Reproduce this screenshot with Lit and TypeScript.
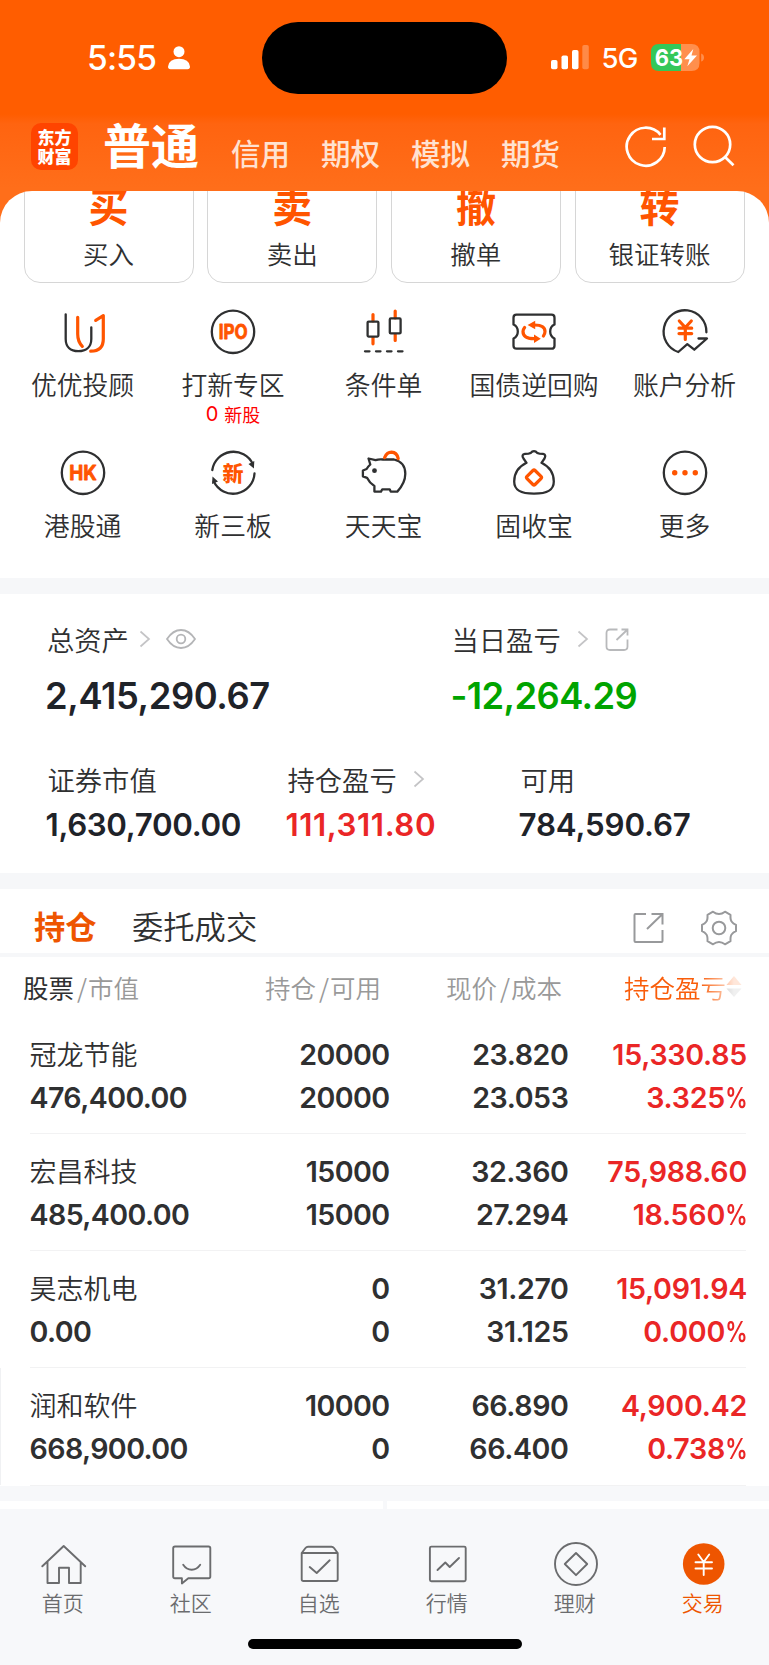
import { LitElement, html, css, svg } from "lit";
import { customElement } from "lit/decorators.js";

const ring = svg`<circle cx="23" cy="22.8" r="21.2" />`;

const serviceIcons: Record<string, unknown> = {
  advisor: svg`<path d="M5.7 5.3V30c0 8 5 12.2 12.6 12.2S31.3 38 31.3 30V18.3"/><path class="o" d="M17.7 8.3V25c0 6 1.300 9 4.600 12.300M35.700 11.300L43.300 6.700V30c0 8-4 12.200-12.600 12.200"/>`,
  ipo: svg`${ring}<text class="glyph" x="23.200" y="30" font-size="20" textLength="29" lengthAdjust="spacingAndGlyphs">IPO</text>`,
  condition: svg`<path class="o" d="M12 5.500V12M12 28.500V34.800M34.200 2V9M34.200 25.500V31.500"/><rect x="6.600" y="12.600" width="10.800" height="15" rx="1"/><rect x="28.800" y="9.400" width="10.800" height="15" rx="1"/><path d="M4 42.300h4.500M15 42.300h4.500M26 42.300h4.500M37 42.300h4.500"/>`,
  bond: svg`<path d="M5.500 5.700H40.500q3 0 3 3V15.500q-4.300 2-4.300 7t4.300 7V36.700q0 3-3 3H5.500q-3 0-3-3V29.500q4.300-2 4.300-7t-4.300-7V8.700q0-3 3-3Z"/><path class="o" stroke-width="2.700" d="M23.500 16C31 16 34 18.500 34 22.500Q34 25 32.400 27M23 29.700C15 29.700 12 26.500 12 22.500Q12 20.500 13.600 18.500"/><path class="of" d="M16.600 16L24.200 11.800V20.200ZM29.800 29.700L23 25.500V33.900Z"/>`,
  analysis: svg`<path d="M44.400 23.300A21.400 21.400 0 1 0 16.300 43L25.300 35.200L32.300 40.700L45 29.500H36.500"/><path class="o" stroke-width="3" d="M17.300 12L23.300 18.500L29.300 12M23.300 18.500V30.500M17 19.200H29.700M17 24.600H29.700"/>`,
  hk: svg`${ring}<text class="glyph" x="23" y="30" font-size="20" textLength="27.500" lengthAdjust="spacingAndGlyphs">HK</text>`,
  board: svg`<path d="M2.300 20A21.400 21.400 0 0 1 42.800 14M44.500 23.500A21.400 21.400 0 0 1 3.800 31.500"/><path class="d" d="M44.300 11L43.900 18.500L38.500 14ZM2 34L2.500 26.500L8 31.500Z"/><text class="glyph cjk" x="23" y="30.500" font-size="21">新</text>`,
  pig: svg`<path d="M1.900 20.500L5.600 19Q7 16.500 9.300 14.500L7.500 8.500L14.500 10.200Q18 9 22 9.500L33 9.500Q44.300 12 44.300 23.800Q44.300 33 36.300 41.600H29.700L28.700 39.300H21.300L20 41.600H13.400V36Q8.500 33 6 27.800L1.900 26.300Z"/><circle class="d" cx="13.500" cy="20.700" r="2.400"/><path class="o" stroke-width="3" d="M23.600 7.600Q26 2.200 30.500 2.200Q36 2.500 37.200 8.600"/>`,
  bag: svg`<path d="M15.500 12.800L12.500 8.500Q10 4.500 14 3.800L17.500 3.600Q20 3.300 21.200 1.600Q23 .700 24.800 1.600Q26 3.300 28.500 3.600L32 3.800Q35.500 4.500 33.500 8.500L30.500 12.800M15.500 12.800C7 17 3.200 24.500 3.200 31.500C3.200 40.500 10 43.600 23 43.600S42.800 40.500 42.800 31.500C42.800 24.500 39 17 30.500 12.800"/><rect class="o" stroke-width="3.200" x="17.300" y="21.800" width="11.400" height="11.400" rx="1.500" transform="rotate(45 23 27.500)"/>`,
  more: svg`${ring}<g class="of"><circle cx="12.700" cy="22.800" r="2.700"/><circle cx="23" cy="22.800" r="2.700"/><circle cx="33.300" cy="22.800" r="2.700"/></g>`,
};

const tabIcons: Record<string, unknown> = {
  home: svg`<path d="M1.300 25.300L22.700 5L44.200 25.300M6.500 21V42H18V26.800H28V42H39.700V21"/>`,
  chat: svg`<path d="M6 5.500H39.500q1.800 0 1.800 1.800V35.500q0 1.800-1.800 1.800H19.300L12.900 42.500V37.300H6q-1.800 0-1.800-1.800V7.300q0-1.800 1.800-1.800Z"/><path d="M14.200 23.700Q17.500 28.700 22.700 28.700T31.200 23.700"/>`,
  pick: svg`<path d="M4.700 12V38.200q0 1.800 1.800 1.800H38.900q1.800 0 1.800-1.800V12L37 7Q36 5.700 34.500 5.700H11Q9.500 5.700 8.500 7ZM4.700 12H40.700"/><path d="M12.700 26L19.700 32L32.700 19.300"/>`,
  market: svg`<rect x="4.900" y="5.600" width="35.800" height="34.700" rx="1.500"/><path d="M12.500 29L20.300 21.500L24.700 26L34 17"/>`,
  wealth: svg`<circle cx="23" cy="23" r="21"/><path d="M23 12L34.200 23L23 34.200L11.800 23Z"/>`,
  trade: svg`<circle cx="22.700" cy="23" r="20.800" fill="#ee5500" stroke="none"/><path stroke="#fff" d="M17.300 13.500L22.700 21L28.200 13.500M22.700 21V34M14.500 21.300H31M14.500 27.500H31"/>`,
};

const actions = [
  ["买", "买入"], ["卖", "卖出"], ["撤", "撤单"], ["转", "银证转账"],
];
const services = [
  ["advisor", "优优投顾", ""], ["ipo", "打新专区", "0"], ["condition", "条件单", ""], ["bond", "国债逆回购", ""], ["analysis", "账户分析", ""],
  ["hk", "港股通", ""], ["board", "新三板", ""], ["pig", "天天宝", ""], ["bag", "固收宝", ""], ["more", "更多", ""],
];
const holdings = [
  ["冠龙节能", "476,400.00", "20000", "20000", "23.820", "23.053", "15,330.85", "3.325"],
  ["宏昌科技", "485,400.00", "15000", "15000", "32.360", "27.294", "75,988.60", "18.560"],
  ["昊志机电", "0.00", "0", "0", "31.270", "31.125", "15,091.94", "0.000"],
  ["润和软件", "668,900.00", "10000", "0", "66.890", "66.400", "4,900.42", "0.738"],
];
const tabs = [
  ["home", "首页"], ["chat", "社区"], ["pick", "自选"], ["market", "行情"], ["wealth", "理财"], ["trade", "交易"],
];

const chevron = html`<svg class="chev" width="12" height="18" viewBox="0 0 12 18"><path d="M1.500 1.500L10 9L1.500 16.500" fill="none" stroke="#c4c4c6" stroke-width="1.700"/></svg>`;

@customElement("app-root")
export class AppRoot extends LitElement {
  static styles = css`
    :host { display: block; width: 769px; height: 1665px; overflow: hidden; background: #fff; color: #2f3031;
      font-family: Inter, "Noto Sans CJK SC", sans-serif; font-weight: 400; }
    * { box-sizing: border-box; }
    svg { display: block; flex: none; }
    .zh, .svc, .card, .lab, .th, .tabbar, .tabs, .nav { font-family: "Noto Sans CJK SC", sans-serif; }

    .head { height: 223px; background: linear-gradient(#ff5d00 0, #ff5d00 114px, #ff6410 124px, #ff6e1a 188px, #ff6e1a 223px); color: #fff; }
    .status { height: 118px; display: grid; grid-template-columns: 262px 245px 262px; }
    .left { display: flex; padding: 38px 0 0 87px; height: 80px; }
    .time { font-size: 33.500px; line-height: 40px; font-weight: 550; letter-spacing: -.8px; width: 81px; }
    .person { margin-top: 8px; }
    .island { margin-top: 22px; height: 72px; border-radius: 36px; background: #000; }
    .right { display: flex; padding-left: 44px; padding-top: 38px; }
    .sig { margin-top: 7px; }
    .net { font-size: 27.500px; line-height: 41px; font-weight: 500; margin-left: 12.500px; width: 38px; letter-spacing: -.8px; }
    .batt { margin: 6px 0 0 11.500px; }
    .nav { display: flex; height: 73px; padding-left: 31px; }
    .logo { width: 47px; height: 47px; margin-top: 5px; border-radius: 10px; background: #ff4400; font-weight: 900; font-size: 17px; line-height: 19px; text-align: center; padding-top: 4px; }
    .main { font-size: 48px; font-weight: 700; line-height: 60px; margin: -5px 0 0 25px; width: 96px; white-space: nowrap; }
    .sub { display: flex; gap: 31px; margin: 13.500px 0 0 32px; font-size: 29.500px; line-height: 40px; font-weight: 500; color: #ffe2d1; width: 394px; white-space: nowrap; }
    .ri { margin-top: 7px; }
    .si { margin: 7px 0 0 26px; }

    .sheet { margin-top: -32px; height: 387px; background: #fff; border-radius: 32px 32px 0 0; position: relative; overflow: hidden; }
    .cards { display: grid; grid-template-columns: repeat(4, 170px); gap: 13.700px; padding-left: 23.500px; height: 92px; overflow: hidden; }
    .card { margin-top: -40px; height: 132px; border: 1.500px solid #d6d6d6; border-radius: 16px; text-align: center; display: flex; flex-direction: column; }
    .big { font-size: 40px; line-height: 50px; font-weight: 700; color: #ff5500; margin-top: 28px; }
    .small { font-size: 25.500px; line-height: 36px; margin-top: 5px; white-space: nowrap; font-weight: 350; }
    .grid { display: grid; grid-template-columns: repeat(5, 150.500px); grid-template-rows: 140.500px 140px; padding: 26px 0 0 7.300px; }
    .svc { display: flex; flex-direction: column; align-items: center; }
    .svc svg { fill: none; stroke: #2f3031; stroke-width: 2.300; stroke-linejoin: round; stroke-linecap: round; overflow: visible; }
    .svc .o { stroke: #ff5500; stroke-width: 3.200; }
    .svc svg .of { fill: #ff5500; stroke: none; }
    .svc svg .d { fill: #2f3031; stroke: none; }
    .glyph { fill: #ff5500; stroke: #ff5500; stroke-width: .8; font-family: Inter; font-weight: 750; text-anchor: middle; }
    .svc .cjk { font-family: "Noto Sans CJK SC"; font-weight: 900; stroke: none; }
    .name { font-size: 25.800px; line-height: 36px; margin-top: 11px; font-weight: 350; white-space: nowrap; }
    .badge { color: #f00; font-size: 18px; line-height: 26px; height: 26px; margin-top: -1px; display: flex; align-items: center; gap: 6px; }
    .badge b { font: 400 20px/26px Inter; }
    .band { height: 15.500px; background: #f6f7f9; }

    .assets { height: 279.500px; padding-top: 25.500px; }
    .two { display: grid; grid-template-columns: 405.500px 1fr; padding-left: 45px; height: 140px; }
    .three { display: grid; grid-template-columns: 240px 233px 1fr; padding-left: 45.500px; }
    .lab { display: flex; align-items: center; height: 40px; font-size: 27.300px; padding-left: 2px; font-weight: 350; white-space: nowrap; }
    .two .far2 { padding-left: 1px; }
    .lab .chev { margin-left: 10px; }
    .lab .far { margin-left: 16px; }
    .v1 { font-size: 36.300px; font-weight: 600; line-height: 44px; margin-top: 15px; color: #1f2329; letter-spacing: -.4px; }
    .v2 { font-size: 31.300px; font-weight: 600; line-height: 40px; margin-top: 6px; color: #1f2329; letter-spacing: -.35px; }
    .v1.green { color: #00a400; letter-spacing: -.6px; }
    .v2.red { letter-spacing: .55px; }
    .v2.avail { letter-spacing: -.15px; }
    .red { color: #ea2626; }

    .tabs { display: flex; height: 64px; padding: 14px 0 0 34px; font-size: 31.300px; line-height: 46px; white-space: nowrap; }
    .on { color: #ee5500; font-weight: 700; width: 98px; }
    .off { width: 500px; font-weight: 350; }
    .rule { height: 4px; background: #f6f7f9; }
    .th { display: grid; grid-template-columns: 381px 181px 1fr; height: 60px; padding-top: 10px; line-height: 40px; font-size: 25.500px; color: #999; white-space: nowrap; font-weight: 350; }
    .hold { display: flex; justify-content: space-between; padding-left: 23px; }
    .th b { font-weight: 400; color: #2f3031; }
    .sl { padding: 0 1px 0 3px; }
    .r { text-align: right; }
    .sort { display: flex; align-items: center; height: 40px; padding-left: 62px; color: #f95d0a; -webkit-mask-image: linear-gradient(90deg, #000 138px, rgba(0,0,0,.15) 172px); mask-image: linear-gradient(90deg, #000 138px, rgba(0,0,0,.15) 172px); }
    .row { margin: 0 23px 0 29.500px; height: 117.300px; border-bottom: 1.500px solid #f2f2f3; display: grid; grid-template-columns: 180px 180px 179px 1fr; font-size: 28.600px; font-weight: 600; line-height: 43px; padding-top: 16px; position: relative; }
    .row.last::before { content: ""; position: absolute; left: -29.500px; top: 0; width: 1px; height: 100%; background: #f0f1f3; }
    .row > div { white-space: nowrap; }
    .row .zh { font-size: 27px; font-weight: 350; display: block; height: 43px; line-height: 42px; letter-spacing: 0; }
    .row .n { height: 43px; letter-spacing: -.6px; }
    .row .c3 { letter-spacing: -.4px; }
    .row .red { margin-right: -1px; }
    .row .red .n { letter-spacing: -.25px; }
    .pc { display: inline-block; transform: scaleX(.78); transform-origin: 100% 50%; margin-left: -6.500px; }
    .cut { height: 8px; display: grid; grid-template-columns: 382.500px 1fr; gap: 4px; }
    .cut i { background: #fff; }
    .foot { background: #f7f8fa; height: 180px; padding-top: 15.500px; }
    .tabbar { display: grid; grid-template-columns: repeat(6, 128px); padding-top: 31.500px; color: #6b6c6e; }
    .tab { display: flex; flex-direction: column; align-items: center; font-size: 21px; line-height: 30px; }
    .tab svg { fill: none; stroke: currentColor; stroke-width: 1.900; stroke-linejoin: round; stroke-linecap: round; }
    .tab span { margin: 0 2.500px 0 0; font-weight: 350; }
    .active { color: #ee5500; }
    .bar { width: 274px; height: 10px; border-radius: 5px; background: #000; margin: 22px 0 0 248px; }
  `;

  render() {
    return html`
      <div class="head">
        <div class="status">
          <div class="left">
            <span class="time">5:55</span>
            <svg class="person" width="22" height="24" viewBox="0 0 22 24" fill="#fff"><circle cx="11" cy="5.700" r="5.500"/><path d="M0 20.500Q1 12.800 11 12.800T22 20.500Q22 23.300 19.500 23.300H2.500Q0 23.300 0 20.500Z"/></svg>
          </div>
          <div class="island"></div>
          <div class="right">
            <svg class="sig" width="38" height="25" viewBox="0 0 38 25" fill="#fff"><rect x="0" y="15" width="6.500" height="9.300" rx="1.800"/><rect x="10.500" y="10.500" width="6.500" height="13.800" rx="1.800"/><rect x="21" y="5" width="6.500" height="19.300" rx="1.800"/><rect x="31.300" y="0" width="6.500" height="24.300" rx="1.800" opacity=".28"/></svg>
            <span class="net">5G</span>
            <svg class="batt" width="54" height="27" viewBox="0 0 54 27">
              <path d="M30 0H40.500Q48.500 0 48.500 8V19Q48.500 27 40.500 27H30Z" fill="#ff8f4d"/>
              <path d="M30 0H8Q0 0 0 8V19Q0 27 8 27H30Z" fill="#34c759"/>
              <path d="M50.200 9.500Q53 10.500 53 13.500T50.200 17.500Z" fill="#ff8f4d"/>
              <text x="3.800" y="21.500" font-family="Inter" font-weight="700" font-size="22.500" fill="#fff" textLength="28.500" lengthAdjust="spacingAndGlyphs">63</text>
              <path d="M42.300 5L33.300 15.300H38.500L36.300 22.300L46 11.500H40.500Z" fill="#fff"/>
            </svg>
          </div>
        </div>
        <div class="nav">
          <div class="logo">东方<br>财富</div>
          <div class="main">普通</div>
          <div class="sub"><span>信用</span><span>期权</span><span>模拟</span><span>期货</span></div>
          <svg class="ri" width="42" height="44" viewBox="0 0 42 44" fill="none" stroke="#fff" stroke-width="2.700"><path d="M39.700 22A19 19 0 1 1 35.500 9.800"/><path d="M39.300 2.500V14H27"/></svg>
          <svg class="si" width="42" height="44" viewBox="0 0 42 44" fill="none" stroke="#fff" stroke-width="2.700"><circle cx="19.500" cy="19.500" r="17.700"/><path d="M31.500 31.500L40.500 40.300"/></svg>
        </div>
      </div>
      <div class="sheet">
        <div class="cards">${actions.map(([g, t]) => html`<div class="card"><div class="big">${g}</div><div class="small">${t}</div></div>`)}</div>
        <div class="grid">${services.map(([i, t, b]) => html`<div class="svc"><svg width="46" height="46" viewBox="0 0 46 46">${serviceIcons[i]}</svg><div class="name">${t}</div>${b ? html`<div class="badge"><b>${b}</b><span>新股</span></div>` : ""}</div>`)}</div>
      </div>
      <div class="band"></div>
      <div class="assets">
        <div class="two">
          <div>
            <div class="lab">总资产${chevron}<svg style="margin-left:15px" width="30" height="20" viewBox="0 0 30 20" fill="none" stroke="#b4b5b7" stroke-width="1.800"><path d="M1 10Q7 1 15 1T29 10Q23 19 15 19T1 10Z"/><circle cx="15" cy="10" r="4.300"/></svg></div>
            <div class="v1">2,415,290.67</div>
          </div>
          <div>
            <div class="lab far2">当日盈亏<span class="far"></span><svg width="12" height="18" viewBox="0 0 12 18"><path d="M1.500 1.500L10 9L1.500 16.500" fill="none" stroke="#c4c4c6" stroke-width="1.700"/></svg><svg style="margin-left:16px" width="24" height="24" viewBox="0 0 24 24" fill="none" stroke="#b8b9bb" stroke-width="1.800"><path d="M12.500 2.500H5Q1.500 2.500 1.500 6V19.500Q1.500 23 5 23H19Q22.500 23 22.500 19.500V12.500M16.500 2.500H22.500V8.500M22 3L11.500 13"/></svg></div>
            <div class="v1 green">-12,264.29</div>
          </div>
        </div>
        <div class="three">
          <div><div class="lab">证券市值</div><div class="v2">1,630,700.00</div></div>
          <div><div class="lab">持仓盈亏<span class="far"></span><svg width="12" height="18" viewBox="0 0 12 18"><path d="M1.500 1.500L10 9L1.500 16.500" fill="none" stroke="#c4c4c6" stroke-width="1.700"/></svg></div><div class="v2 red">111,311.80</div></div>
          <div><div class="lab">可用</div><div class="v2 avail">784,590.67</div></div>
        </div>
      </div>
      <div class="band"></div>
      <div class="tabs">
        <span class="on">持仓</span><span class="off">委托成交</span>
        <svg style="margin-top:9px" width="32" height="32" viewBox="0 0 32 32" fill="none" stroke="#98999b" stroke-width="2"><path d="M14 2H3.500Q2.500 2 2.500 3V29Q2.500 30 3.500 30H29.500Q30.500 30 30.500 29V18M19.500 2H30.500V12.500M30 2.500L15 17"/></svg>
        <svg style="margin-left:36px;margin-top:7px" width="38" height="36" viewBox="-19 -18 38 36" fill="none" stroke="#98999b" stroke-width="2"><path stroke-linejoin="round" d="M-6-16.300Q-3-14 0-14T6-16.300L11.500-13.200Q11.200-7.500 13-6Q14-4.500 17-3.200V3.200Q14 4.500 13 6Q11.200 7.500 11.500 13.200L6 16.300Q3 14 0 14T-6 16.300L-11.500 13.200Q-11.200 7.500-13 6Q-14 4.500-17 3.200V-3.200Q-14-4.500-13-6Q-11.200-7.500-11.500-13.200Z"/><circle r="6.300"/></svg>
      </div>
      <div class="rule"></div>
      <div class="th">
        <div class="hold"><span><b>股票</b><span class="sl">/</span>市值</span><span>持仓<span class="sl">/</span>可用</span></div>
        <div class="r">现价<span class="sl">/</span>成本</div>
        <div class="sort">持仓盈亏<svg width="16" height="22" viewBox="0 0 16 22"><path d="M8 0L15.500 9H.500Z" fill="#ff5d0a"/><path d="M8 21L15.500 12.500H.500Z" fill="#999"/></svg></div>
      </div>
      ${holdings.map((h, i) => html`<div class="row ${i === holdings.length - 1 ? "last" : ""}">
        <div><span class="zh">${h[0]}</span><div class="n">${h[1]}</div></div>
        <div class="r"><div class="n">${h[2]}</div><div class="n">${h[3]}</div></div>
        <div class="r"><div class="n c3">${h[4]}</div><div class="n c3">${h[5]}</div></div>
        <div class="r red"><div class="n">${h[6]}</div><div class="n">${h[7]}<span class="pc">%</span></div></div>
      </div>`)}
      <div class="foot">
        <div class="cut"><i></i><i></i></div>
        <div class="tabbar">${tabs.map(([i, t]) => html`<div class="tab ${i === "trade" ? "active" : ""}"><svg width="46" height="46" viewBox="0 0 46 46">${tabIcons[i]}</svg><span>${t}</span></div>`)}</div>
        <div class="bar"></div>
      </div>
    `;
  }
}
